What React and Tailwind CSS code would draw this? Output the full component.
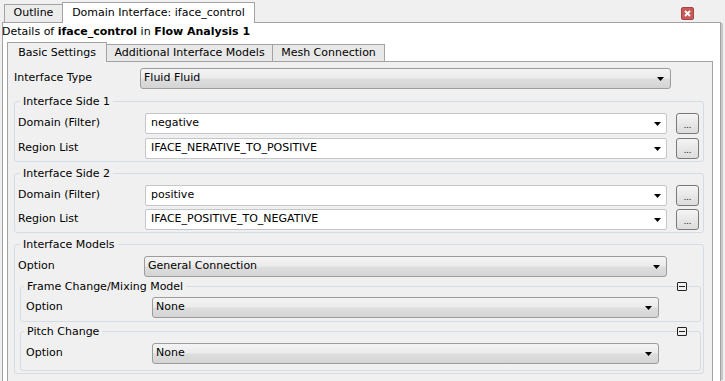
const ArrowDown = () => (
  <svg width="7" height="4" viewBox="0 0 7 4" className="shrink-0">
    <path d="M0 0h7L3.5 4z" fill="#000" />
  </svg>
);

function Combo({ value, width, white }) {
  const look = white
    ? 'bg-white border-[#c3c6cb] rounded-[2px] pl-[5px] pr-[5px]'
    : 'bg-[linear-gradient(to_bottom,#f4f4f4_0%,#ebebeb_48%,#dedede_52%,#d4d4d4_100%)] border-[#9c9c9c] rounded-[3px] pl-[3px] pr-[6px]';
  return (
    <div className={`h-[21px] flex items-center border ${look} ${width}`}>
      <span className="flex-1 truncate">{value}</span>
      <ArrowDown />
    </div>
  );
}

function DotsButton() {
  return (
    <div className="ml-[9px] w-[23px] h-[21px] border border-[#7a7a7a] rounded-[3px] bg-[linear-gradient(to_bottom,#f4f4f4,#dcdcdc)] flex items-end justify-center pb-[3px] text-[8px] leading-none">
      ...
    </div>
  );
}

function PickRow({ label, value }) {
  return (
    <div className="flex items-center">
      <span className="w-[130px] pl-[3px]">{label}</span>
      <Combo value={value} width="w-[522px]" white />
      <DotsButton />
    </div>
  );
}

function Group({ title, className, children, legendClass = 'ml-[5px]' }) {
  return (
    <fieldset className={`border border-[#d6dce3] rounded-[3px] ${className}`}>
      <legend className={`${legendClass} px-[3px] leading-[13px]`}>{title}</legend>
      {children}
    </fieldset>
  );
}

const CollapseIcon = () => (
  <div className="absolute right-[13px] top-[-11px] w-[10px] h-[9px] border border-[#222] rounded-[1px] bg-[#f0f0f0] flex items-center justify-center">
    <div className="w-[6px] h-px bg-[#222]" />
  </div>
);

export default function App() {
  return (
    <div className="w-[725px] h-[381px] bg-[#f0f0f0] overflow-hidden flex flex-col font-['DejaVu_Sans',sans-serif] text-[11px] text-black">
      {/* window tabs */}
      <div className="h-[22px] flex items-end pl-[4px] relative z-10">
        <div className="w-[59px] h-[18px] border border-b-0 border-[#a3a3a3] bg-[#ececec] flex items-center justify-center">
          Outline
        </div>
        <div className="w-[193px] h-[21px] -mb-px -ml-px border border-b-0 border-[#a3a3a3] bg-white flex items-center justify-center">
          Domain Interface: iface_control
        </div>
        <div className="ml-auto mr-[31px] self-start mt-[7px] w-[13px] h-[13px] rounded-[2px] bg-[#c75a5a] border border-[#a84444] flex items-center justify-center">
          <svg width="7" height="7" viewBox="0 0 7 7">
            <path d="M1 1l5 5M6 1l-5 5" stroke="#fff" strokeWidth="1.8" />
          </svg>
        </div>
      </div>

      <div className="ml-[2px] w-[719px] flex-1 bg-white border border-b-0 border-[#a3a3a3] shadow-[3px_0_0_-1px_#c8c8c8] flex flex-col">
        <div className="h-[19px] -ml-px flex items-center whitespace-pre">
          Details of <b>iface_control</b> in <b>Flow Analysis 1</b>
        </div>

        {/* settings tabs */}
        <div className="h-[19px] flex items-end pl-[4px] relative z-10">
          <div className="w-[100px] h-[20px] -mb-px border border-b-0 border-[#a3a3a3] bg-[#f0f0f0] flex items-center justify-center pt-px">
            Basic Settings
          </div>
          <div className="w-[167px] h-[17px] -ml-px border border-b-0 border-[#a3a3a3] bg-[#e8e8e8] flex items-center justify-center">
            Additional Interface Models
          </div>
          <div className="w-[113px] h-[17px] -ml-px border border-b-0 border-[#a3a3a3] bg-[#e8e8e8] flex items-center justify-center">
            Mesh Connection
          </div>
        </div>

        <div className="ml-[4px] w-[706px] flex-1 bg-[#f0f0f0] border border-b-0 border-[#a3a3a3] pl-[6px] pt-[6px]">
          <div className="flex items-center">
            <span className="w-[126px]">Interface Type</span>
            <Combo value="Fluid Fluid" width="w-[531px]" />
          </div>

          <Group title="Interface Side 1" className="mt-[6px] w-[690px] pb-[2px]">
            <div className="flex flex-col gap-[4px] pt-[5px]">
              <PickRow label="Domain (Filter)" value="negative" />
              <PickRow label="Region List" value="IFACE_NERATIVE_TO_POSITIVE" />
            </div>
          </Group>

          <Group title="Interface Side 2" className="mt-[5px] w-[690px] pb-[2px]">
            <div className="flex flex-col gap-[3px] pt-[5px]">
              <PickRow label="Domain (Filter)" value="positive" />
              <PickRow label="Region List" value="IFACE_POSITIVE_TO_NEGATIVE" />
            </div>
          </Group>

          <Group title="Interface Models" className="mt-[5px] w-[690px] pb-[2px]">
            <div className="flex items-center pt-[5px]">
              <span className="w-[129px] pl-[3px]">Option</span>
              <Combo value="General Connection" width="w-[523px]" />
            </div>

            <Group title="Frame Change/Mixing Model" legendClass="ml-[3px]" className="relative mt-[3px] ml-[5px] mr-[2px] pb-[3px]">
              <CollapseIcon />
              <div className="flex items-center pt-[4px]">
                <span className="w-[131px] pl-[5px]">Option</span>
                <Combo value="None" width="w-[507px]" />
              </div>
            </Group>

            <Group title="Pitch Change" legendClass="ml-[3px]" className="relative mt-[3px] ml-[5px] mr-[2px] pb-[6px]">
              <CollapseIcon />
              <div className="flex items-center pt-[5px]">
                <span className="w-[131px] pl-[5px]">Option</span>
                <Combo value="None" width="w-[507px]" />
              </div>
            </Group>
          </Group>
        </div>
      </div>
    </div>
  );
}
